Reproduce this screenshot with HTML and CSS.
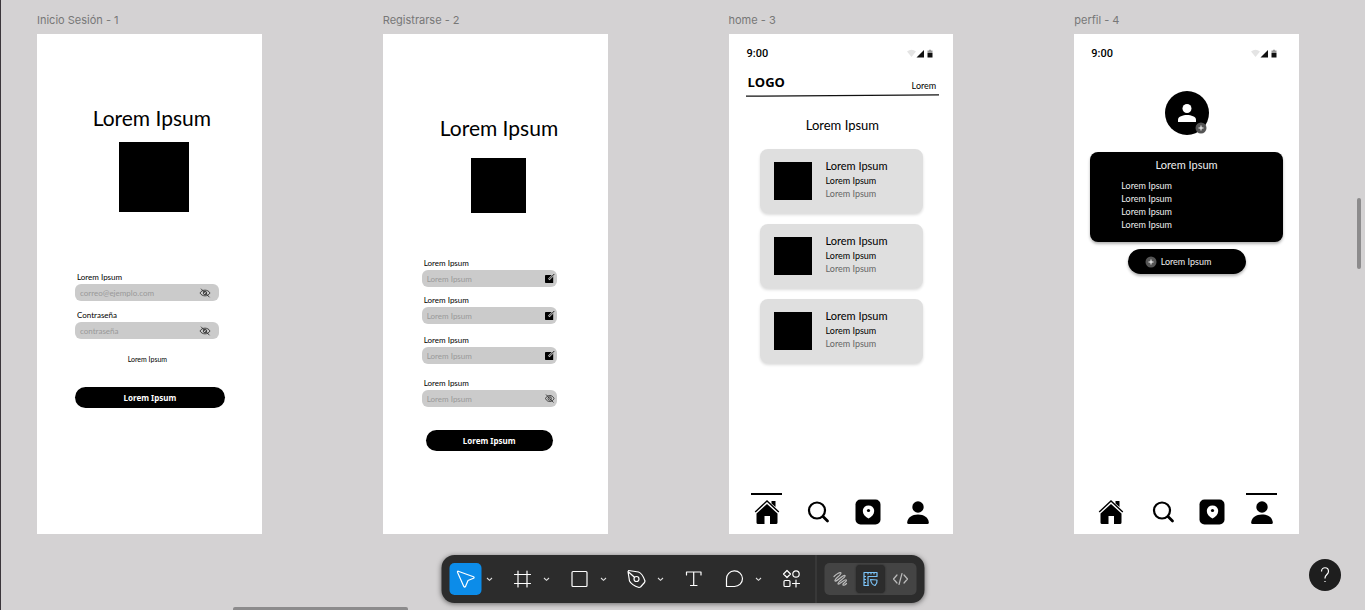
FILE: index.html
```html
<!DOCTYPE html>
<html lang="es">
<head>
<meta charset="utf-8">
<title>Wireframes</title>
<link rel="stylesheet" href="styles.css">
</head>
<body>
<svg class="sprite" aria-hidden="true">
  <symbol id="eye-off" viewBox="0 0 12 10"><g fill="none" stroke="#222" stroke-width=".8"><path d="M1 5C3 1.200 9 1.200 11 5C9 8.800 3 8.800 1 5Z"/><circle cx="6" cy="5" r="1.700"/><path d="M2 .7L10.500 9.300"/></g></symbol>
  <symbol id="edit" viewBox="0 0 11 11"><path fill="currentColor" d="M1.800 2H9.200V10H1.800Q1 10 1 9.200V2.800Q1 2 1.800 2Z"/><path d="M4.800 6.500L10 1.200" stroke="#cbcbcb" stroke-width="2.200"/><path d="M5.300 6L10.300 1" stroke="#222" stroke-width="1"/></symbol>
  <symbol id="status" viewBox="0 0 26 10"><path fill="#e4e4e4" d="M0 2.500Q4.500-1 9 2.500L4.500 8Z"/><path fill="#111" d="M17 1V8.500H9.500Z"/><path fill="#999" d="M20.500 1.500H22V.8H24V1.500H25.500V4H20.500Z"/><path fill="#111" d="M20.500 4H25.500V8.500H20.500Z"/></symbol>
  <symbol id="home" viewBox="0 0 26 26"><path d="M1.200 13L13 2L24.800 13" fill="none" stroke="currentColor" stroke-width="1.400"/><path fill="currentColor" d="M17.500 2H21.500V8L17.500 4.500ZM13 5L23.500 14.500V23.500Q23.500 25 22 25H16V17H10.500V25H4Q2.500 25 2.500 23.500V14.500Z"/></symbol>
  <symbol id="search" viewBox="0 0 26 26"><circle cx="13" cy="11.500" r="8" fill="none" stroke="currentColor" stroke-width="2.200"/><path d="M19 17.500L23.500 22" stroke="currentColor" stroke-width="2.800" stroke-linecap="round"/></symbol>
  <symbol id="place" viewBox="0 0 26 26"><rect x=".5" y=".5" width="25" height="25" rx="5" fill="currentColor"/><path fill="#fff" d="M13.500 6.500C10 6.500 7.800 9 7.800 12C7.800 15 10 17.500 13.500 19.500C17 17.500 19.200 15 19.200 12C19.200 9 17 6.500 13.500 6.500Z"/><circle cx="13.500" cy="11.500" r="1.600" fill="currentColor"/></symbol>
  <symbol id="user" viewBox="0 0 26 26"><circle cx="13" cy="8" r="5.700" fill="currentColor"/><path fill="currentColor" d="M2.200 23.500C2.500 18.500 7 15.500 13 15.500S23.500 18.500 23.800 23.500Q23.800 25 22.500 25H3.500Q2.200 25 2.200 23.500Z"/></symbol>
  <symbol id="plus-dot" viewBox="0 0 12 12"><circle cx="6" cy="6" r="5.500" fill="#555"/><path d="M3.500 6H8.500M6 3.500V8.500" stroke="#fff"/></symbol>
  <symbol id="chevron" viewBox="0 0 16 16"><path d="M5.500 7L8 9.300L10.500 7" fill="none" stroke="#ddd" stroke-width="1.100"/></symbol>
</svg>

<main class="canvas">
  <section class="board">
    <h2 class="board-name">Inicio Sesión - 1</h2>
    <div class="screen login">
      <h1 class="title">Lorem Ipsum</h1>
      <div class="picture"></div>
      <form class="form">
        <div class="field"><label for="mail">Lorem Ipsum</label><div class="box"><input id="mail" type="email" placeholder="correo@ejemplo.com"><svg class="eye"><use href="#eye-off"/></svg></div></div>
        <div class="field"><label for="pass">Contraseña</label><div class="box"><input id="pass" type="password" placeholder="contraseña"><svg class="eye"><use href="#eye-off"/></svg></div></div>
        <a class="hint" href="#">Lorem Ipsum</a>
        <button class="submit" type="button">Lorem Ipsum</button>
      </form>
    </div>
  </section>

  <section class="board">
    <h2 class="board-name">Registrarse - 2</h2>
    <div class="screen register">
      <h1 class="title">Lorem Ipsum</h1>
      <div class="picture"></div>
      <form class="form">
        <div class="field"><label for="r1">Lorem Ipsum</label><div class="box"><input id="r1" type="text" placeholder="Lorem Ipsum"><svg class="pencil"><use href="#edit"/></svg></div></div>
        <div class="field"><label for="r2">Lorem Ipsum</label><div class="box"><input id="r2" type="text" placeholder="Lorem Ipsum"><svg class="pencil"><use href="#edit"/></svg></div></div>
        <div class="field"><label for="r3">Lorem Ipsum</label><div class="box"><input id="r3" type="text" placeholder="Lorem Ipsum"><svg class="pencil"><use href="#edit"/></svg></div></div>
        <div class="field"><label for="r4">Lorem Ipsum</label><div class="box"><input id="r4" type="password" placeholder="Lorem Ipsum"><svg class="pencil" viewBox="0 0 11 11"><path d="M1.500 5.500C3 1.500 8.500 1.500 10 5.500C8.500 9.500 3 9.500 1.500 5.500ZM2 1.500L9.500 9.500" fill="none" stroke="#222" stroke-width=".8"/><circle cx="5.700" cy="5.500" r="1.700" fill="none" stroke="#222" stroke-width=".8"/></svg></div></div>
        <button class="submit" type="button">Lorem Ipsum</button>
      </form>
    </div>
  </section>

  <section class="board">
    <h2 class="board-name">home - 3</h2>
    <div class="screen app start">
      <div class="status"><span>9:00</span><svg><use href="#status"/></svg></div>
      <header class="brand"><strong>LOGO</strong><a href="#">Lorem</a></header>
      <svg class="rule" viewBox="0 0 193 3" preserveAspectRatio="none"><path d="M0 2.200L193 .8" stroke="#111" stroke-width="1.300"/></svg>
      <h1 class="subtitle">Lorem Ipsum</h1>
      <div class="cards">
        <article class="card"><div class="thumb"></div><div><h3>Lorem Ipsum</h3><p>Lorem Ipsum</p><p class="muted">Lorem Ipsum</p></div></article>
        <article class="card"><div class="thumb"></div><div><h3>Lorem Ipsum</h3><p>Lorem Ipsum</p><p class="muted">Lorem Ipsum</p></div></article>
        <article class="card"><div class="thumb"></div><div><h3>Lorem Ipsum</h3><p>Lorem Ipsum</p><p class="muted">Lorem Ipsum</p></div></article>
      </div>
      <nav class="tabs">
        <a class="current" href="#" aria-label="Inicio"><svg><use href="#home"/></svg></a>
        <a href="#" aria-label="Buscar"><svg><use href="#search"/></svg></a>
        <a href="#" aria-label="Lugares"><svg><use href="#place"/></svg></a>
        <a href="#" aria-label="Perfil"><svg><use href="#user"/></svg></a>
      </nav>
    </div>
  </section>

  <section class="board">
    <h2 class="board-name">perfil - 4</h2>
    <div class="screen app profile">
      <div class="status"><span>9:00</span><svg><use href="#status"/></svg></div>
      <div class="avatar">
        <svg class="face" viewBox="0 0 18 18"><circle cx="9" cy="4.500" r="4.500" fill="#fff"/><path fill="#fff" d="M0 18V15.500C0 12.500 5 11 9 11S18 12.500 18 15.500V18Z"/></svg>
        <svg class="badge"><use href="#plus-dot"/></svg>
      </div>
      <div class="panel">
        <h3>Lorem Ipsum</h3>
        <ul><li>Lorem Ipsum</li><li>Lorem Ipsum</li><li>Lorem Ipsum</li><li>Lorem Ipsum</li></ul>
      </div>
      <button class="add" type="button"><svg><use href="#plus-dot"/></svg>Lorem Ipsum</button>
      <nav class="tabs">
        <a href="#" aria-label="Inicio"><svg><use href="#home"/></svg></a>
        <a href="#" aria-label="Buscar"><svg><use href="#search"/></svg></a>
        <a href="#" aria-label="Lugares"><svg><use href="#place"/></svg></a>
        <a class="current" href="#" aria-label="Perfil"><svg><use href="#user"/></svg></a>
      </nav>
    </div>
  </section>
</main>

<div class="scroll-y"></div>
<div class="scroll-x"></div>

<div class="toolbar" role="toolbar" aria-label="Herramientas">
  <div class="tool"><button class="main active" aria-label="Mover"><svg viewBox="0 0 24 24"><path d="M4.700 4.200L20 9.800Q21.200 10.400 20 11.200L14.500 13.500L12 19.400Q11.200 20.800 10.300 19.400L4 5.200Q3.800 4 4.700 4.200Z"/></svg></button><button class="more" aria-label="Más opciones de mover"><svg><use href="#chevron"/></svg></button></div>
  <div class="tool"><button class="main" aria-label="Marco"><svg viewBox="0 0 24 24"><path d="M7.500 4V20M16.500 4V20M4 7.500H20M4 16.500H20"/></svg></button><button class="more" aria-label="Más opciones de marco"><svg><use href="#chevron"/></svg></button></div>
  <div class="tool"><button class="main" aria-label="Forma"><svg viewBox="0 0 24 24"><rect x="4.500" y="4.500" width="15" height="15" rx="1"/></svg></button><button class="more" aria-label="Más formas"><svg><use href="#chevron"/></svg></button></div>
  <div class="tool"><button class="main" aria-label="Pluma"><svg viewBox="0 0 24 24"><path d="M4 3.500L14 5Q18 6.500 20.500 14L20 15.500L16 20L14.500 20.500Q7 18 5 14L3.500 4.500L10 10.200"/><circle cx="12" cy="12" r="2.500"/></svg></button><button class="more" aria-label="Más opciones de pluma"><svg><use href="#chevron"/></svg></button></div>
  <div class="tool"><button class="main" aria-label="Texto"><svg viewBox="0 0 24 24"><path d="M5 8V5H19.500V8M12.200 5V18.500M9 18.500H15.500"/></svg></button></div>
  <div class="tool"><button class="main" aria-label="Comentario"><svg viewBox="0 0 24 24"><path d="M4 19.500V12A8 7.800 0 1 1 12 19.500Z"/></svg></button><button class="more" aria-label="Más opciones de comentario"><svg><use href="#chevron"/></svg></button></div>
  <div class="tool"><button class="main" aria-label="Acciones"><svg viewBox="0 0 24 24"><path d="M7.500 3.500L11 7L7.500 10.500L4 7ZM16.500 13V20M13 16.500H20"/><circle cx="16.500" cy="7" r="3.200"/><rect x="4.500" y="13.500" width="6" height="6" rx="1"/></svg></button></div>
  <div class="divider"></div>
  <div class="modes">
    <button aria-label="Dibujar"><svg viewBox="0 0 24 24"><path d="M5.500 9.500C8 7 12 4.500 12.500 6C13 8 5.500 12 6.500 14C7.500 15.500 15 7 16.500 8.500C18 10 8.500 15 9.500 17C10.500 18.500 16.500 11.500 17.800 13C18.800 14.500 13.500 16.500 14.500 18C15.200 18.800 17 17.500 18 16.500"/></svg></button>
    <button class="selected" aria-label="Diseño"><svg viewBox="0 0 24 24"><path d="M10 18.500H5.500V5.500H18.500V9.500H9.500V18.500M9.500 5.500V7M12.500 5.500V7M15.500 5.500V7M5.500 9.500H7M5.500 12.500H7M5.500 15.500H7M12 12.500L18.500 13Q19 16 16.500 18.500Q13 18 12 12.500Z"/></svg></button>
    <button aria-label="Desarrollo"><svg viewBox="0 0 24 24"><path d="M8.500 8L5 12L8.500 16M15.500 8L19 12L15.500 16M13.500 6.500L10.500 17.500"/></svg></button>
  </div>
</div>
<button class="help" aria-label="Ayuda"><svg viewBox="0 0 24 24"><path d="M8.500 8.500C8.500 3.500 15.500 3.500 15.500 8.500C15.500 11.500 12 11.500 12 15V15.500M12 18V19"/></svg></button>
</body>
</html>
```
FILE: styles.css
```css
* { box-sizing: border-box; }
body, h1, h2, h3, p, ul { margin: 0; padding: 0; }
body { min-height: 100vh; background: #d4d2d3; border-left: 1px solid #3a353a; color: #000; font-family: Lato, "Open Sans", sans-serif; overflow: hidden; }
button, input { font: inherit; border: 0; padding: 0; margin: 0; }
button { cursor: pointer; }
a { color: inherit; text-decoration: none; }
ul { list-style: none; }
svg { display: block; }
.sprite { position: absolute; width: 0; height: 0; }

/* Canvas and boards */
.canvas { display: flex; gap: 121px; padding: 12px 66px 0 36px; }
.board { flex: 1 1 0; min-width: 0; display: flex; flex-direction: column; gap: 6px; }
.board-name { font: 400 11px/16px Inter, sans-serif; color: #777; white-space: nowrap; }
.screen { display: flex; flex-direction: column; min-height: 500px; background: #fff; }
.title { font-size: 21px; line-height: 26px; font-weight: 400; text-align: center; white-space: nowrap; }
.picture { background: #000; align-self: center; aspect-ratio: 1; }

/* Forms */
.form { display: flex; flex-direction: column; }
.field { display: flex; flex-direction: column; gap: 2px; }
.field label { font-size: 8px; line-height: 10px; padding-left: 2px; }
.box { display: flex; align-items: center; height: 17px; border-radius: 6px; background: #cbcbcb; }
.box input { flex: 1; min-width: 0; height: 17px; padding-left: 5px; background: transparent; font-size: 8px; outline: 0; }
.box input::placeholder { color: #999; opacity: 1; }
.submit { height: 21px; border-radius: 11px; background: #000; color: #fff; font: 700 8px/12px "Noto Sans", sans-serif; }
.eye { width: 12px; height: 10px; margin-right: 8px; }
.pencil { width: 11px; height: 11px; margin-right: 2px; }

.login { padding: 71px 37px 0 38px; }
.login .title { margin-left: 4px; }
.login .picture { width: 70px; margin: 11px 0 0 8px; }
.login .form { margin-top: 60px; }
.login .field { margin-right: 6px; }
.login .field + .field { margin-top: 9px; }
.hint { align-self: center; margin: 15px 5px 23px 0; font-size: 7px; line-height: 10px; }

.register { padding: 81px 51px 0 39px; }
.register .title, .register .picture { margin-left: 18px; }
.register .picture { width: 55px; margin-top: 17px; }
.register .form { margin-top: 45px; }
.register .field + .field { margin-top: 8px; }
.register .field:nth-child(3) { margin-top: 11px; }
.register .field:nth-child(4) { margin-top: 14px; }
.register .submit { margin: 23px 4px 0; }

/* App screens */
.app { padding-bottom: 9px; }
.start { padding-left: 17px; padding-right: 14px; }
.profile { padding-left: 16px; padding-right: 16px; }
.status { display: flex; justify-content: space-between; align-items: center; height: 16px; margin-top: 12px; padding: 0 6px 0 1px; font: 500 11px/16px Roboto, sans-serif; }
.status svg { width: 26px; height: 10px; }
.brand { display: flex; justify-content: space-between; align-items: flex-end; margin-top: 11px; padding: 0 3px 0 2px; }
.brand strong { font: 700 13px/18px "Open Sans", sans-serif; }
.brand a { font-size: 9px; line-height: 11px; }
.rule { width: 100%; height: 3px; margin-top: 3px; }
.subtitle { margin-top: 18px; font-size: 13px; line-height: 20px; font-weight: 400; text-align: center; }
.cards { display: flex; flex-direction: column; gap: 11px; margin: 14px 16px 0 14px; }
.card { display: flex; gap: 14px; height: 64px; padding: 9px 14px; align-items: flex-start; border-radius: 8px; background: #dfdfdf; box-shadow: 0 2px 3px rgba(0, 0, 0, .14); }
.thumb { width: 38px; height: 38px; margin-top: 4px; background: #000; }
.card h3 { font-size: 11px; line-height: 16px; font-weight: 400; }
.card p { font-size: 9px; line-height: 13px; }
.card .muted { color: #666; }
.tabs { display: grid; grid-template-columns: repeat(4, 1fr); margin: auto -4px 0; }
.tabs a { display: flex; justify-content: center; padding-top: 6px; background: linear-gradient(#000, #000) center top / 0 2px no-repeat; }
.tabs .current { background-size: 31px 2px; }
.tabs svg { width: 26px; height: 26px; }

.avatar { position: relative; align-self: center; display: grid; place-items: center; width: 44px; height: 44px; margin-top: 29px; border-radius: 50%; background: #000; }
.face { width: 18px; height: 18px; }
.badge { position: absolute; right: 2px; bottom: 1px; width: 12px; height: 12px; }
.panel { margin-top: 17px; padding: 5px 0 11px; border-radius: 8px; background: #000; color: #eee; box-shadow: 0 2px 3px rgba(0, 0, 0, .3); }
.panel h3 { font-size: 11px; line-height: 16px; font-weight: 400; text-align: center; margin-bottom: 6px; }
.panel li { padding-left: 31px; font-size: 9px; line-height: 13px; }
.add { align-self: center; display: flex; align-items: center; gap: 4px; width: 118px; height: 25px; margin-top: 7px; padding-left: 17px; border-radius: 13px; background: #000; color: #eee; font-size: 9px; box-shadow: 0 2px 3px rgba(0, 0, 0, .3); }
.add svg { width: 12px; height: 12px; }

/* Editor controls over the canvas */
.scroll-y { position: fixed; right: 4px; top: 198px; width: 4px; height: 71px; border-radius: 2px; background: #8c8b8c; }
.scroll-x { position: fixed; left: 233px; bottom: 0; width: 175px; height: 3px; border-radius: 2px 2px 0 0; background: #8c8b8c; }
.toolbar { position: fixed; left: 50%; bottom: 7px; transform: translateX(-50%); display: flex; align-items: center; gap: 9px; padding: 8px; border-radius: 13px; background: #2c2c2c; box-shadow: 0 1px 5px rgba(0, 0, 0, .5); }
.tool { display: flex; align-items: center; }
.toolbar button { background: transparent; display: grid; place-items: center; }
.toolbar .main { width: 32px; height: 32px; border-radius: 5px; }
.toolbar .active { background: #0c8ce9; }
.main svg, .modes svg { width: 24px; height: 24px; fill: none; stroke: #fff; stroke-width: 1.2; stroke-linejoin: round; stroke-linecap: round; }
.more { width: 16px; height: 32px; }
.more svg { width: 16px; height: 16px; }
.divider { width: 1px; height: 48px; margin: -8px -1px; background: #444; }
.modes { display: flex; justify-content: space-between; width: 92px; height: 32px; padding: 2px; border-radius: 5px; background: #444; }
.modes button { width: 28px; height: 28px; border-radius: 4px; }
.modes svg { stroke: #bbb; }
.toolbar .selected { background: #2c2c2c; box-shadow: 0 0 2px #222; }
.modes .selected svg { stroke: #7cc4f8; }
.help { position: fixed; right: 24px; bottom: 19px; display: grid; place-items: center; width: 32px; height: 32px; border-radius: 50%; background: #1e1e1e; }
.help svg { width: 24px; height: 24px; fill: none; stroke: #fff; stroke-width: 1.2; }
```
